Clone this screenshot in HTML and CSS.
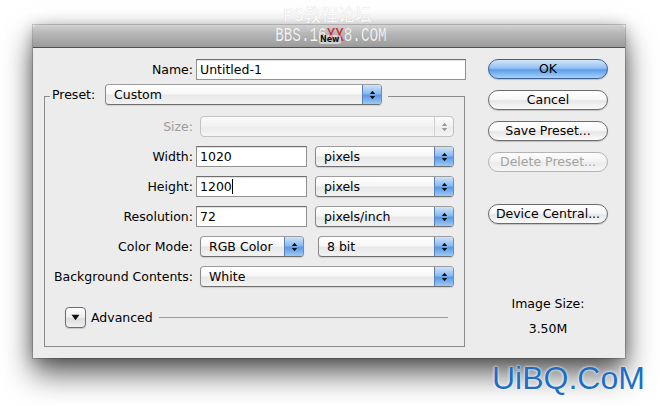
FILE: index.html
```html
<!DOCTYPE html>
<html>
<head>
<meta charset="utf-8">
<link rel="stylesheet" href="styles.css">
</head>
<body>
<div class="stage">
  <div class="wm-top">PS教程论坛</div>
  <div class="window">
    <div class="titlebar">
      <span class="title">BBS.16<span class="red">XX</span>8.COM</span>
      <span class="new-badge">New</span>
    </div>
    <div class="content">
      <div class="form">
        <div class="name-row">
          <span class="lbl lbl-name">Name:</span>
          <div class="field w-name">Untitled-1</div>
        </div>
        <div class="group">
          <div class="legend">
            <span class="legend-lbl">Preset:</span>
            <div class="popup w-preset"><span class="ptext">Custom</span><span class="cap"><svg width="7" height="10" viewBox="0 0 7 10"><path d="M3.5 0.8 L6.2 4 L0.8 4 Z M0.8 6 L6.2 6 L3.5 9.2 Z" fill="#111"/></svg></span></div>
          </div>
          <div class="grow first">
            <span class="lbl dis">Size:</span>
            <div class="popup disabled w-full"><span class="ptext"></span><span class="cap"><svg width="7" height="10" viewBox="0 0 7 10"><path d="M3.5 0.8 L6.2 4 L0.8 4 Z M0.8 6 L6.2 6 L3.5 9.2 Z" fill="#9a9a9a"/></svg></span></div>
          </div>
          <div class="grow">
            <span class="lbl">Width:</span>
            <div class="field w-num">1020</div>
            <div class="popup w-unit"><span class="ptext">pixels</span><span class="cap"><svg width="7" height="10" viewBox="0 0 7 10"><path d="M3.5 0.8 L6.2 4 L0.8 4 Z M0.8 6 L6.2 6 L3.5 9.2 Z" fill="#111"/></svg></span></div>
          </div>
          <div class="grow">
            <span class="lbl">Height:</span>
            <div class="field w-num">1200<span class="caret"></span></div>
            <div class="popup w-unit"><span class="ptext">pixels</span><span class="cap"><svg width="7" height="10" viewBox="0 0 7 10"><path d="M3.5 0.8 L6.2 4 L0.8 4 Z M0.8 6 L6.2 6 L3.5 9.2 Z" fill="#111"/></svg></span></div>
          </div>
          <div class="grow">
            <span class="lbl">Resolution:</span>
            <div class="field w-num">72</div>
            <div class="popup w-unit"><span class="ptext">pixels/inch</span><span class="cap"><svg width="7" height="10" viewBox="0 0 7 10"><path d="M3.5 0.8 L6.2 4 L0.8 4 Z M0.8 6 L6.2 6 L3.5 9.2 Z" fill="#111"/></svg></span></div>
          </div>
          <div class="grow">
            <span class="lbl">Color Mode:</span>
            <div class="popup w-mode"><span class="ptext">RGB Color</span><span class="cap"><svg width="7" height="10" viewBox="0 0 7 10"><path d="M3.5 0.8 L6.2 4 L0.8 4 Z M0.8 6 L6.2 6 L3.5 9.2 Z" fill="#111"/></svg></span></div>
            <div class="popup w-bit"><span class="ptext">8 bit</span><span class="cap"><svg width="7" height="10" viewBox="0 0 7 10"><path d="M3.5 0.8 L6.2 4 L0.8 4 Z M0.8 6 L6.2 6 L3.5 9.2 Z" fill="#111"/></svg></span></div>
          </div>
          <div class="grow">
            <span class="lbl">Background Contents:</span>
            <div class="popup w-full"><span class="ptext">White</span><span class="cap"><svg width="7" height="10" viewBox="0 0 7 10"><path d="M3.5 0.8 L6.2 4 L0.8 4 Z M0.8 6 L6.2 6 L3.5 9.2 Z" fill="#111"/></svg></span></div>
          </div>
          <div class="advanced">
            <span class="disclosure"><svg width="9" height="7" viewBox="0 0 9 7"><path d="M0.5 0.8 L8.5 0.8 L4.5 6.2 Z" fill="#111"/></svg></span>
            <span class="adv-text">Advanced</span>
            <span class="adv-line"></span>
          </div>
        </div>
      </div>
      <div class="side">
        <div class="btn ok">OK</div>
        <div class="btn">Cancel</div>
        <div class="btn">Save Preset...</div>
        <div class="btn btn-dis">Delete Preset...</div>
        <div class="btn btn-device">Device Central...</div>
        <div class="imgsize">
          <div class="is-lbl">Image Size:</div>
          <div class="is-val">3.50M</div>
        </div>
      </div>
    </div>
  </div>
  <div class="wm-bottom">UiBQ.CoM</div>
</div>
</body>
</html>
```

FILE: styles.css
```css
* { box-sizing: border-box; }
html, body { margin: 0; padding: 0; background: #fff; }
body { font-family: "DejaVu Sans", "Noto Sans", sans-serif; font-size: 12.5px; color: #000; }

.stage { position: relative; width: 660px; height: 406px; overflow: hidden; background: #fff; padding-top: 25px; }

.wm-top {
  position: absolute; left: 283px; top: 4px;
  font-family: "Noto Sans CJK SC", "DejaVu Sans", sans-serif;
  font-size: 17px; line-height: 20px; color: #fbfbfb;
  text-shadow: 0 0 1px rgba(0,0,0,0.18);
}

.window {
  margin-left: 33px; width: 592px; height: 333px;
  background: #ececec;
  box-shadow: 0 0 0 1px rgba(0,0,0,0.18), 0 16px 28px rgba(0,0,0,0.62), 0 2px 14px rgba(0,0,0,0.28);
}

.titlebar {
  position: relative; height: 23px;
  border-bottom: 1px solid #4f4f4f;
  border-radius: 4px 4px 0 0;
  background: linear-gradient(#d2d2d2 0%, #b6b6b6 40%, #9b9b9b 100%);
  display: flex; justify-content: center; align-items: center;
}
.title {
  font-family: "Liberation Mono", "DejaVu Sans Mono", monospace;
  font-size: 21px; line-height: 22px; color: #f4f4f4;
  transform: scaleX(0.68);
  margin-left: 4px;
  text-shadow: 0 0 1px rgba(0,0,0,0.2);
}
.title .red { color: #d31f2a; }
.new-badge {
  position: absolute; left: 286px; top: 10px;
  font-size: 8px; font-weight: bold; line-height: 9px;
  color: #111; background: rgba(255,255,255,0.5);
  padding: 0 1px; border-radius: 2px;
}

.content { display: flex; height: 310px; padding: 11px 0 0 10px; }

.form { width: 423px; flex: none; }

.name-row { display: flex; align-items: center; height: 21px; }
.lbl { flex: none; width: 148px; margin-right: 3px; text-align: right; line-height: 21px; white-space: nowrap; }
.lbl-name { width: 150px; }
.lbl.dis { color: #9b9b9b; }

.field {
  height: 21px; flex: none;
  background: #fff;
  border: 1px solid #929292; border-top-color: #6f6f6f;
  box-shadow: inset 0 1px 1px rgba(0,0,0,0.12);
  padding: 0 3px; line-height: 19px; white-space: nowrap;
}
.w-name { width: 270px; }
.w-num { width: 111px; }
.caret { display: inline-block; width: 1px; height: 15px; background: #000; vertical-align: -3px; }

.group {
  margin: 16px 1px 0 1px;
  border: 1px solid #8c8c8c;
  padding: 0 9px 18px 0;
}
.legend {
  display: flex; align-items: center; width: fit-content;
  margin: -13px 0 0 5px; padding: 0 6px 0 2px;
  background: #ececec; height: 21px;
}
.legend-lbl { width: 47px; line-height: 21px; }

.popup {
  position: relative; flex: none; height: 21px;
  display: flex; align-items: center;
  border: 1px solid #8a8a8a; border-top-color: #9c9c9c; border-bottom-color: #6e6e6e;
  border-radius: 4px;
  background: linear-gradient(#ffffff 0%, #f7f7f7 45%, #e8e8e8 55%, #f2f2f2 100%);
  box-shadow: 0 1px 1px rgba(0,0,0,0.12);
  margin-left: 4px;
}
.ptext { flex: 1; padding-left: 8px; line-height: 19px; white-space: nowrap; }
.cap {
  flex: none; width: 19px; height: 19px;
  display: flex; align-items: center; justify-content: center;
  border-left: 1px solid #5c7fb5;
  border-radius: 0 3px 3px 0;
  background: linear-gradient(#cfe3fa 0%, #8bbaf0 45%, #5b9ae8 55%, #9bcaf6 100%);
}
.popup.disabled { border-color: #c2c2c2; background: linear-gradient(#fbfbfb, #f1f1f1 50%, #ebebeb 51%, #f4f4f4); box-shadow: none; }
.popup.disabled .cap { background: transparent; border-left: 1px solid #d0d0d0; }

.w-preset { width: 277px; margin-left: 6px; }
.w-full { width: 254px; }
.w-unit { width: 139px; margin-left: 8px; }
.w-mode { width: 104px; }
.w-bit { width: 136px; margin-left: 14px; }

.grow { display: flex; align-items: center; height: 21px; margin-top: 9px; }
.grow.first { margin-top: 11px; }

.advanced { display: flex; align-items: center; height: 21px; margin-top: 20px; padding-left: 20px; }
.disclosure {
  width: 21px; height: 21px; flex: none;
  display: flex; align-items: center; justify-content: center;
  border: 1px solid #6e6e6e; border-radius: 4px;
  background: linear-gradient(#ffffff, #ededed 50%, #dcdcdc 51%, #f0f0f0);
  box-shadow: 0 1px 1px rgba(0,0,0,0.15);
}
.adv-text { margin-left: 5px; line-height: 21px; }
.adv-line { flex: 1; height: 1px; background: #9a9a9a; margin: 0 7px 0 6px; }

.side { width: 120px; margin-left: 22px; display: flex; flex-direction: column; }
.btn {
  height: 20px; width: 120px;
  border: 1px solid #6b6b6b; border-radius: 10px;
  background: linear-gradient(#ffffff 0%, #f7f7f7 45%, #e6e6e6 55%, #fbfbfb 100%);
  box-shadow: 0 1px 1px rgba(0,0,0,0.18);
  text-align: center; line-height: 18px; white-space: nowrap;
  margin-bottom: 11px;
}
.btn.ok {
  border-color: #3e5f95;
  background: linear-gradient(#d3e7fc 0%, #93c0f2 45%, #5e9de9 55%, #a8d3fa 100%);
}
.btn.btn-dis { color: #a3a3a3; border-color: #b4b4b4; box-shadow: none; background: linear-gradient(#fdfdfd, #f3f3f3 50%, #ececec 51%, #f6f6f6); }
.btn.btn-device { margin-top: 21px; }

.imgsize { margin-top: 61px; text-align: center; }
.is-lbl { line-height: 16px; }
.is-val { line-height: 16px; margin-top: 9px; }

.wm-bottom {
  position: absolute; left: 492px; top: 362px;
  font-family: "Liberation Sans", Arial, sans-serif;
  font-size: 32px; line-height: 32px; color: #1d6fc6;
  text-shadow: 0 0 3px #fff, 0 0 1px #fff;
}
```
